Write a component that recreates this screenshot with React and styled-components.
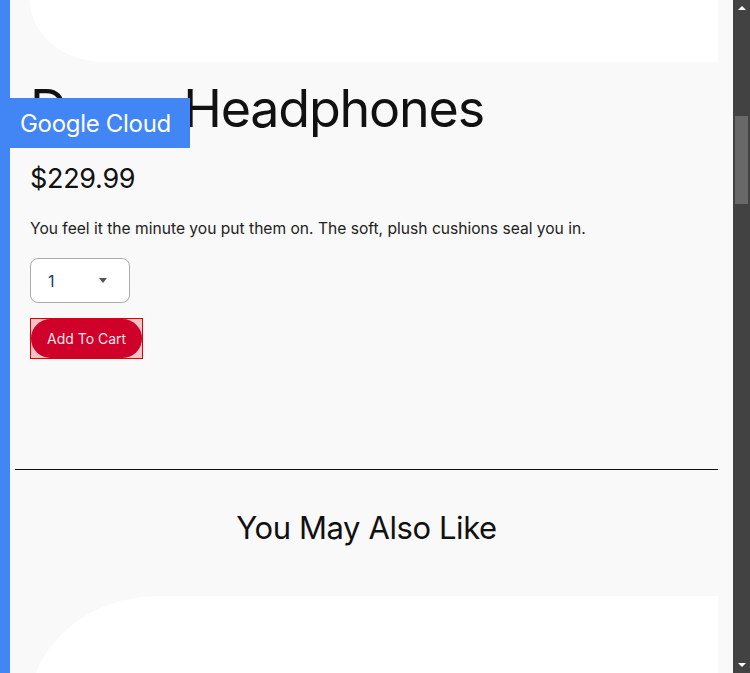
import React from 'react'
import styled, { createGlobalStyle } from 'styled-components'

const GlobalStyle = createGlobalStyle`
    html, body {
        margin: 0;
        padding: 0;
        height: 100%;
        overflow: hidden;
    }
    body {
        font-family: Inter, "Noto Sans", sans-serif;
        color: #111;
    }
`

const Page = styled.div`
    display: flex;
    width: 750px;
    height: 673px;
    overflow: hidden;
    position: relative;
`

const SideStrip = styled.div`
    width: 10px;
    flex-shrink: 0;
    background-color: #4285f4;
`

const Main = styled.main`
    flex: 1;
    background-color: #f9f9f9;
    padding: 0 15px 0 5px;
    overflow: hidden;
`

const ImageCard = styled.div`
    margin-left: 15px;
    height: ${props => props.height}px;
    background-color: #fff;
    border-radius: ${props => props.top ? '0 0 0 130px / 0 0 0 110px' : '130px 0 0 0 / 110px 0 0 0'};
`

const Details = styled.section`
    padding: 0 15px;
    height: 386px;
`

const Title = styled.h2`
    font-weight: 400;
    font-size: 52px;
    line-height: 1;
    margin: 21px 0 0;
    letter-spacing: -1.2px;
`

const Price = styled.p`
    font-size: 27px;
    margin: 28px 0 0;
    line-height: 1.2;
    letter-spacing: -0.3px;
`

const Description = styled.p`
    font-size: 15.6px;
    margin: 23px 0 0;
    line-height: 1.4;
    color: #222;
`

const SelectBox = styled.div`
    display: flex;
    align-items: center;
    justify-content: space-between;
    box-sizing: border-box;
    width: 100px;
    height: 45px;
    margin-top: 18px;
    padding: 0 22px 0 17px;
    background-color: #fff;
    border: 1px solid #acacac;
    border-radius: 8px;
    font-size: 16px;
    color: #1a3a6a;
`

const Caret = styled.span`
    width: 0;
    height: 0;
    border-left: 4px solid transparent;
    border-right: 4px solid transparent;
    border-top: 5px solid #555;
`

const Highlight = styled.div`
    display: inline-flex;
    margin-top: 15px;
    border: 1px solid #e00000;
    background-color: #f0c4c7;
`

const Button = styled.button`
    height: 39px;
    padding: 0 16px;
    border: none;
    border-radius: 20px;
    background-color: #cf0029;
    color: #fbe6ea;
    font-family: inherit;
    font-size: 14px;
    cursor: pointer;
`

const Divider = styled.hr`
    margin: 0;
    border: none;
    border-top: 1px solid #111;
`

const SectionTitle = styled.h3`
    text-align: center;
    font-weight: 400;
    font-size: 31px;
    letter-spacing: -0.4px;
    margin: 0;
    padding: 38px 0 48px;
    line-height: 40px;
`

const Badge = styled.div`
    position: absolute;
    left: 10px;
    top: 98px;
    width: 180px;
    height: 50px;
    box-sizing: border-box;
    padding-left: 10px;
    display: flex;
    align-items: center;
    background-color: #4285f4;
    color: #fff;
    font-size: 24px;
    letter-spacing: -0.3px;
`

const Scrollbar = styled.div`
    width: 17px;
    flex-shrink: 0;
    background-color: #424242;
    display: flex;
    flex-direction: column;
    align-items: center;
`

const Arrow = styled.span`
    width: 0;
    height: 0;
    margin: ${props => props.up ? '6px 0 0' : 'auto 0 6px'};
    border-left: 4px solid transparent;
    border-right: 4px solid transparent;
    ${props => props.up ? 'border-bottom: 4px solid #fff;' : 'border-top: 4px solid #fff;'}
`

const Thumb = styled.div`
    width: 13px;
    height: 88px;
    margin-top: 106px;
    background-color: #686868;
`

const App = () => {
    return (
        <>
            <GlobalStyle />
            <Page>
                <SideStrip />
                <Main>
                    <ImageCard top height={62} />
                    <Details>
                        <Title>Dome Headphones</Title>
                        <Price>$229.99</Price>
                        <Description>You feel it the minute you put them on. The soft, plush cushions seal you in.</Description>
                        <SelectBox>
                            <span>1</span>
                            <Caret />
                        </SelectBox>
                        <Highlight>
                            <Button>Add To Cart</Button>
                        </Highlight>
                    </Details>
                    <Divider />
                    <SectionTitle>You May Also Like</SectionTitle>
                    <ImageCard height={120} />
                </Main>
                <Scrollbar>
                    <Arrow up />
                    <Thumb />
                    <Arrow />
                </Scrollbar>
                <Badge>Google Cloud</Badge>
            </Page>
        </>
    )
}

export default App
